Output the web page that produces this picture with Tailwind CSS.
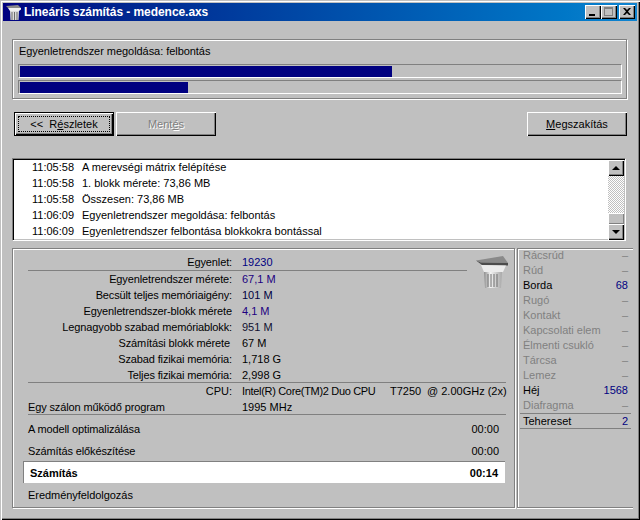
<!DOCTYPE html>
<html lang="hu">
<head>
    <meta charset="UTF-8">
    <title>Lineáris számítás - medence.axs</title>
    <script src="https://cdn.jsdelivr.net/npm/@tailwindcss/browser@4"></script>
</head>
<body class="bg-[#c0c0c0]">
    <!-- window -->
    <div class="w-[640px] h-[520px] overflow-hidden flex flex-col bg-[#c0c0c0] text-[11px] leading-4 text-black font-['Liberation_Sans',Arial,sans-serif] pt-[3px] pl-[3px] pr-[3px] shadow-[inset_1px_1px_0_#c0c0c0,inset_2px_2px_0_#fff,inset_-1px_-1px_0_#000,inset_-2px_-2px_0_#808080]">

        <!-- title bar -->
        <div class="h-[18px] shrink-0 flex items-center bg-gradient-to-r from-[#000080] to-[#1084d0] pl-[3px] pr-[2px]">
            <svg class="w-[15px] h-[16px] mr-[3px]" viewBox="0 0 15 16">
                <path d="M0 2 12 1l3 3H2z" fill="#8a8a8a"/>
                <path d="M2 4h13v1.500L13 7H4z" fill="#f0f0f0"/>
                <path d="M4 7h9l-.5 9h-8z" fill="#dcdcdc"/>
                <path d="M6 8v8M8.500 8v8M11 8v8" stroke="#6c6c6c"/>
            </svg>
            <span class="text-white font-bold text-[12px] tracking-[-0.06px] flex-1">Lineáris számítás - medence.axs</span>
            <div class="flex items-center">
                <div class="w-4 h-[14px] bg-[#c0c0c0] shadow-[inset_1px_1px_0_#fff,inset_-1px_-1px_0_#000,inset_-2px_-2px_0_#808080] flex items-end justify-center pb-[3px] pr-[2px]">
                    <div class="w-[6px] h-[2px] bg-black"></div>
                </div>
                <div class="w-4 h-[14px] bg-[#c0c0c0] shadow-[inset_1px_1px_0_#fff,inset_-1px_-1px_0_#000,inset_-2px_-2px_0_#808080] flex items-center justify-center pr-px pb-px">
                    <div class="w-[9px] h-[9px] border border-[#808080] border-t-2"></div>
                </div>
                <div class="w-4 h-[14px] ml-[2px] bg-[#c0c0c0] shadow-[inset_1px_1px_0_#fff,inset_-1px_-1px_0_#000,inset_-2px_-2px_0_#808080] flex items-center justify-center pr-px pb-px">
                    <svg class="w-2 h-[7px]" viewBox="0 0 8 7"><path d="M0 0h2l2 2 2-2h2L5 3.500 8 7H6L4 5 2 7H0l3-3.500z" fill="#000"/></svg>
                </div>
            </div>
        </div>

        <!-- progress group -->
        <div class="mt-[18px] ml-[9px] w-[615px] h-[60px] shrink-0 border border-[#808080] shadow-[inset_1px_1px_0_#fff,1px_1px_0_#fff] pl-[5px] pr-[4px]">
            <div class="h-[24px] pt-[3px] pl-px tracking-[-0.05px]">Egyenletrendszer megoldása: felbontás</div>
            <div class="h-[14px] border border-[#808080] border-r-white border-b-white px-px pt-px">
                <div class="h-full w-[372px] bg-[#000080]"></div>
            </div>
            <div class="h-[14px] mt-[2px] border border-[#808080] border-r-white border-b-white px-px pt-px">
                <div class="h-full w-[168px] bg-[#000080]"></div>
            </div>
        </div>

        <!-- buttons -->
        <div class="mt-[13px] ml-[11px] w-[613px] h-6 shrink-0 flex">
            <button class="w-[100px] h-6 border border-black bg-[#c0c0c0] shadow-[inset_1px_1px_0_#fff,inset_-1px_-1px_0_#000,inset_-2px_-2px_0_#808080] flex items-center justify-center relative">
                <span class="absolute inset-[3px] border border-dotted border-black"></span>
                <span>&lt;&lt;&nbsp;&nbsp;R<u>é</u>szletek</span>
            </button>
            <button class="w-[100px] h-6 ml-[2px] bg-[#c0c0c0] text-[#808080] shadow-[inset_1px_1px_0_#fff,inset_-1px_-1px_0_#000,inset_-2px_-2px_0_#808080] [text-shadow:1px_1px_0_#fff]">Ment<u>é</u>s</button>
            <button class="w-[100px] h-6 ml-auto bg-[#c0c0c0] shadow-[inset_1px_1px_0_#fff,inset_-1px_-1px_0_#000,inset_-2px_-2px_0_#808080]"><u>M</u>egszakítás</button>
        </div>

        <!-- log -->
        <div class="mt-[22px] ml-[9px] w-[614px] h-[83px] shrink-0 flex bg-white border border-[#808080] border-r-white border-b-white shadow-[inset_1px_1px_0_#000,inset_-1px_-1px_0_#c0c0c0] pr-px">
            <div class="flex-1 pl-[19px] overflow-hidden whitespace-nowrap">
                <div class="h-4 flex"><span class="w-[50px]">11:05:58</span><span>A merevségi mátrix felépítése</span></div>
                <div class="h-4 flex"><span class="w-[50px]">11:05:58</span><span>1. blokk mérete: 73,86 MB</span></div>
                <div class="h-4 flex"><span class="w-[50px]">11:05:58</span><span>Összesen: 73,86 MB</span></div>
                <div class="h-4 flex"><span class="w-[50px]">11:06:09</span><span>Egyenletrendszer megoldása: felbontás</span></div>
                <div class="h-4 flex"><span class="w-[50px]">11:06:09</span><span>Egyenletrendszer felbontása blokkokra bontással</span></div>
            </div>
            <!-- scrollbar -->
            <div class="w-4 mt-px flex flex-col bg-[repeating-conic-gradient(#fff_0_25%,#c0c0c0_0_50%)] bg-[length:2px_2px]">
                <div class="h-4 bg-[#c0c0c0] shadow-[inset_1px_1px_0_#fff,inset_-1px_-1px_0_#000,inset_-2px_-2px_0_#808080] flex items-center justify-center pb-px pr-px">
                    <div class="w-0 h-0 border-x-[4px] border-x-transparent border-b-[4px] border-b-black"></div>
                </div>
                <div class="flex-1"></div>
                <div class="h-[11px] bg-[#c0c0c0] shadow-[inset_1px_1px_0_#fff,inset_-1px_-1px_0_#808080]"></div>
                <div class="h-4 bg-[#c0c0c0] shadow-[inset_1px_1px_0_#fff,inset_-1px_-1px_0_#000,inset_-2px_-2px_0_#808080] flex items-center justify-center pb-px pr-px">
                    <div class="w-0 h-0 border-x-[4px] border-x-transparent border-t-[4px] border-t-black"></div>
                </div>
            </div>
        </div>

        <!-- lower panels -->
        <div class="mt-[7px] ml-[9px] flex shrink-0 h-[260px]">
            <!-- stats -->
            <div class="relative w-[503px] h-[260px] border border-[#808080] shadow-[inset_1px_1px_0_#fff,1px_1px_0_#fff] pl-[15px] pr-[8px] pt-[5px]">
                <svg class="absolute left-[462px] top-[6px] w-[34px] h-[33px]" viewBox="0 0 34 33">
                    <defs>
                        <linearGradient id="shaft" x1="0" x2="1" y1="0" y2="0">
                            <stop offset="0" stop-color="#8c8c8c"/>
                            <stop offset="0.35" stop-color="#f4f4f4"/>
                            <stop offset="1" stop-color="#a8a8a8"/>
                        </linearGradient>
                    </defs>
                    <path d="M1 5.500 28 1 33 8 6 7.500z" fill="#8a8a8a"/>
                    <path d="M1 5.500 6 7.500 33 8 33 10.500 7 10z" fill="#4c4c4c"/>
                    <path d="M6 10 31 10.500 28 17H9z" fill="#ececec"/>
                    <path d="M9 17H27L26 33H10z" fill="url(#shaft)"/>
                    <path d="M13 19v13M16 19v13M19 19v13M22 19v13" stroke="#6c6c6c"/>
                </svg>

                <div class="h-4 flex"><span class="w-[204px] shrink-0 text-right tracking-[-0.13px]">Egyenlet:</span><span class="ml-[10px] text-[#000080]">19230</span></div>
                <div class="h-px w-[439px] bg-[#808080]"></div>
                <div class="h-4 flex"><span class="w-[204px] shrink-0 text-right tracking-[-0.13px]">Egyenletrendszer mérete:</span><span class="ml-[10px] text-[#200080]">67,1 M</span></div>
                <div class="h-4 flex"><span class="w-[204px] shrink-0 text-right tracking-[-0.13px]">Becsült teljes memóriaigény:</span><span class="ml-[10px] text-[#000040]">101 M</span></div>
                <div class="h-4 flex"><span class="w-[204px] shrink-0 text-right tracking-[-0.13px]">Egyenletrendszer-blokk mérete</span><span class="ml-[10px] text-[#200080]">4,1 M</span></div>
                <div class="h-4 flex"><span class="w-[204px] shrink-0 text-right tracking-[-0.13px]">Legnagyobb szabad memóriablokk:</span><span class="ml-[10px] text-[#101030]">951 M</span></div>
                <div class="h-4 flex"><span class="w-[202px] shrink-0 text-right tracking-[-0.13px]">Számítási blokk mérete</span><span class="ml-[12px]">67 M</span></div>
                <div class="h-4 flex"><span class="w-[204px] shrink-0 text-right tracking-[-0.13px]">Szabad fizikai memória:</span><span class="ml-[10px]">1,718 G</span></div>
                <div class="h-[15px] flex"><span class="w-[204px] shrink-0 text-right tracking-[-0.13px]">Teljes fizikai memória:</span><span class="ml-[10px]">2,998 G</span></div>
                <div class="h-px bg-[#808080]"></div>
                <div class="h-4 flex whitespace-nowrap"><span class="w-[204px] shrink-0 text-right">CPU:</span><span class="ml-[10px] w-[148px] shrink-0 tracking-[-0.32px]">Intel(R) Core(TM)2 Duo CPU</span><span class="w-[37px] shrink-0">T7250</span><span>@ 2.00GHz (2x)</span></div>
                <div class="h-[15px] flex"><span class="w-[214px] shrink-0 tracking-[-0.13px]">Egy szálon működő program</span><span>1995 MHz</span></div>
                <div class="h-px bg-[#808080]"></div>

                <div class="h-[22px] mt-[3px] flex items-center justify-between pr-[7px]"><span class="tracking-[-0.13px]">A modell optimalizálása</span><span>00:00</span></div>
                <div class="h-[21px] flex items-center justify-between pr-[7px]"><span class="tracking-[-0.13px]">Számítás előkészítése</span><span>00:00</span></div>
                <div class="h-[22px] ml-[-5px] mr-px bg-white border-t border-l border-[#808080] flex items-center justify-between pl-[6px] pr-[7px] font-bold"><span>Számítás</span><span>00:14</span></div>
                <div class="h-[23px] flex items-center"><span class="tracking-[-0.05px]">Eredményfeldolgozás</span></div>
            </div>

            <!-- element list -->
            <div class="ml-[2px] w-[116px] h-[260px] border-l border-t border-b border-[#808080] shadow-[inset_1px_1px_0_#fff,0_1px_0_#fff] pl-[5px] pr-[5px] text-[#808080] leading-[15px]">
                <div class="h-[15px] -mt-px flex justify-between"><span>Rácsrúd</span><span>–</span></div>
                <div class="h-[15px] flex justify-between"><span>Rúd</span><span>–</span></div>
                <div class="h-[15px] flex justify-between text-black"><span>Borda</span><span class="text-[#000080]">68</span></div>
                <div class="h-[15px] flex justify-between"><span>Rugó</span><span>–</span></div>
                <div class="h-[15px] flex justify-between"><span>Kontakt</span><span>–</span></div>
                <div class="h-[15px] flex justify-between"><span>Kapcsolati elem</span><span>–</span></div>
                <div class="h-[15px] flex justify-between"><span>Élmenti csukló</span><span>–</span></div>
                <div class="h-[15px] flex justify-between"><span>Tárcsa</span><span>–</span></div>
                <div class="h-[15px] flex justify-between"><span>Lemez</span><span>–</span></div>
                <div class="h-[15px] flex justify-between text-black"><span>Héj</span><span class="text-[#000080]">1568</span></div>
                <div class="h-[15px] flex justify-between"><span>Diafragma</span><span>–</span></div>
                <div class="h-4 border-t border-b border-[#808080] -mx-[3px] px-[3px] flex justify-between text-black leading-[14px]"><span>Tehereset</span><span class="text-[#000080]">2</span></div>
            </div>
        </div>
    </div>
</body>
</html>
